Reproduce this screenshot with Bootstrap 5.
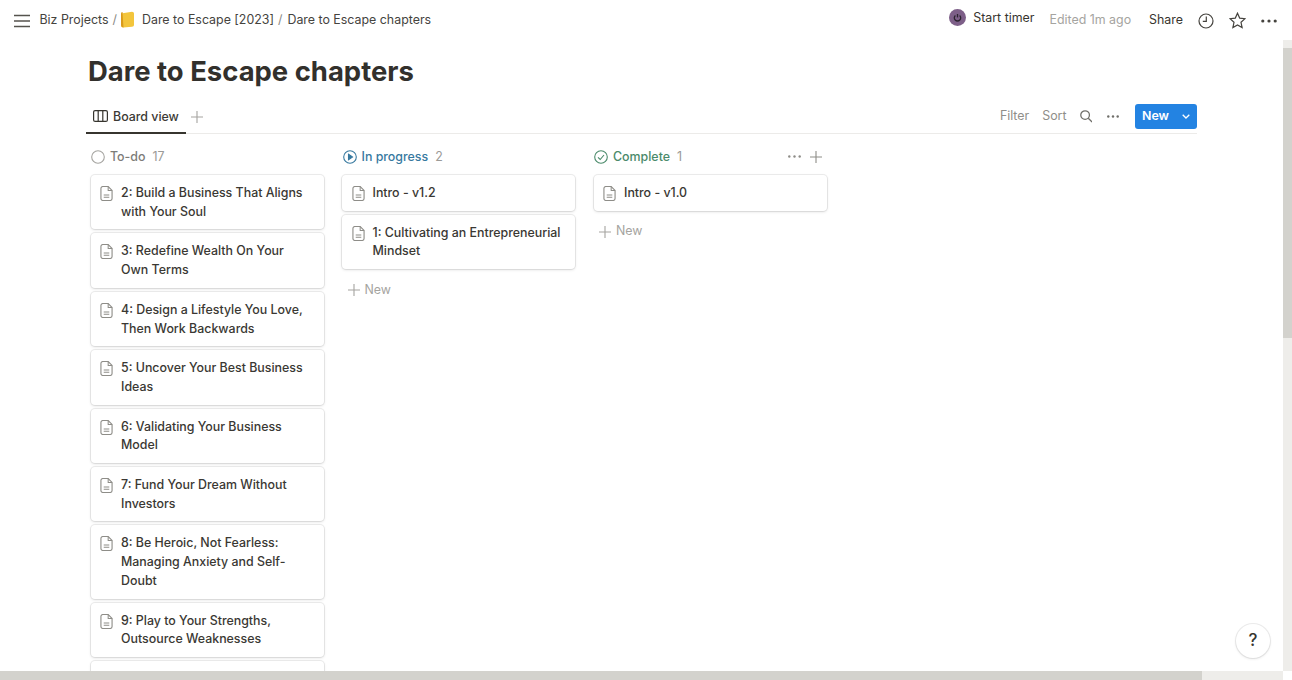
<!DOCTYPE html>
<html lang="en">
<head>
<meta charset="utf-8">
<title>Dare to Escape chapters</title>
<link href="https://cdn.jsdelivr.net/npm/bootstrap@5.3.0/dist/css/bootstrap.min.css" rel="stylesheet">
<style>
html,body{height:100%;overflow:hidden;background:#fff}
body{font-family:Inter,"Liberation Sans",sans-serif;color:#37352f;font-size:12.4px}
.app-frame{width:1292px;height:680px}
.top-strip{height:40px;flex:none;padding:1px 15px 0 14px}
.crumbs{margin-left:9.5px;color:#45433e}
.crumb-sep{color:#8a8984;margin:0 0 0 4px}
.crumb-book{width:15px;height:17px;margin:-2px 7px 0 3px}
.crumb-last{margin-left:5px}
.timer-dot{margin-top:-7px}
.timer-text{margin:-5px 15px 0 7px}
.edited{color:#a5a4a0;margin-right:18px}
.share{margin-right:14.5px}
.clock-ico{margin-right:15.5px}
.star-ico{margin-right:15px}
.page-body{min-height:0}
.page-col{min-width:0;padding-left:86px;overflow:hidden}
.scroll-v{width:9px;background:#eeedea;flex:none}
.scroll-v-thumb{height:290px;margin-top:8px;background:#d3d2cd}
.scroll-h{height:9px;background:#eeedea;flex:none}
.scroll-h-thumb{width:1202px;background:#d3d2cd}
.scroll-corner{width:9px;background:#fff}
.page-title{font-size:27.45px;font-weight:700;color:#32302c;line-height:36px;margin:13px 0 0 2px}
.tabs-row{width:1111px;height:35px;margin-top:10px;border-bottom:1px solid #ecebe9}
.tab-on{height:35px;width:100px;margin-bottom:-1px;border-bottom:2px solid #37352f;padding:0 0 0 7px;color:#3c3a35;font-weight:500}
.tab-on svg{margin-right:5px}
.tab-label{margin-top:3px}
.tab-plus{margin:2px 0 0 5px}
.tools{color:#8f8e89;margin-top:1px}
.tools>span{margin-right:13px}
.search-ico{margin-right:15px}
.btn-new{height:25px;width:62px;margin-left:16px;background:#2383e2;color:#fff;font-weight:600;font-size:12.4px;border-radius:3px;padding:0 7px 0 7px}
.btn-new:hover{background:#2383e2;color:#fff}
.board{width:750px;padding-left:4px;gap:16.5px}
.lane{width:235px;flex:none}
.lane-head{height:41px;padding:4px 0 0 1px;font-weight:500}
.lane-name{margin:2px 0 0 5px}
.lane-count{margin:2px 0 0 7px;color:#9b9a97;font-weight:400}
.todo-tone{color:#7d7c78}
.prog-tone{color:#37799f}
.done-tone{color:#4a8a6a}
.lane-tools{gap:9px;margin-right:6px}
.task{background:#fff;border-radius:4px;box-shadow:0 0 0 1px rgba(15,15,15,.07),0 1px 3px rgba(15,15,15,.13);padding:9px 10px 8px 9.5px;margin:0 1.5px 4px .5px;line-height:18.7px;font-weight:500;color:#3a3833;border:0}
.task svg{flex:none;margin:2px 8px 0 0}
.add-row{color:#a5a4a0;height:30px;padding:4px 0 0 6px}
.add-row svg{margin-right:5px}
.help-bubble{position:absolute;right:22px;bottom:22px;width:34px;height:34px;border-radius:50%;background:#fff;box-shadow:0 0 0 1px rgba(15,15,15,.07),0 1px 3px rgba(15,15,15,.1);font-size:17px;font-weight:500;color:#37352f}
</style>
</head>
<body>
<svg width="0" height="0" class="position-absolute">
  <symbol id="doc" viewBox="0 0 14 16"><path d="M1 2.500a2 2 0 0 1 2-2H8.800L13 4.700V13.500a2 2 0 0 1-2 2H3a2 2 0 0 1-2-2z" fill="none" stroke="#8e8d88" stroke-width="1.200"/><path d="M8.800.5v4.200H13M4 9.500h6M4 12h6" fill="none" stroke="#8e8d88" stroke-width="1.100"/></symbol>
  <symbol id="plus" viewBox="0 0 12 12"><path d="M6 0v12M0 6h12" stroke="currentColor" stroke-width="1.100"/></symbol>
</svg>
<div class="app-frame d-flex flex-column position-relative">
  <header class="top-strip d-flex align-items-center">
    <svg width="16" height="14" viewBox="0 0 16 14" fill="none" stroke="#55534e" stroke-width="1.500"><path d="M0 1.500h16M0 7h16M0 12.500h16"/></svg>
    <nav class="crumbs d-flex align-items-center flex-grow-1">
      <span>Biz Projects</span><span class="crumb-sep">/</span>
      <svg class="crumb-book" viewBox="0 0 15 17"><path d="M1 2.500 L12 .8 Q14 .8 14 2.500 V14 Q14 15.600 12 15.800 L3 16.500 Q1 16.500 1 14Z" fill="#f3c53c"/><path d="M1 2.500 Q1 .9 2.500 1 L3.500 16.400 Q1 16.500 1 14Z" fill="#d99a1c"/></svg>
      <span>Dare to Escape [2023]</span><span class="crumb-sep">/</span><span class="crumb-last">Dare to Escape chapters</span>
    </nav>
    <svg class="timer-dot" width="17" height="17" viewBox="0 0 17 17"><circle cx="8.500" cy="8.500" r="8.500" fill="#7d5f88"/><path d="M6.400 6.400a3.200 3.200 0 1 0 4.200 0" fill="none" stroke="#2c2430" stroke-width="1.300"/><path d="M8.500 5v3.400" stroke="#2c2430" stroke-width="1.300"/></svg>
    <span class="timer-text">Start timer</span>
    <span class="edited">Edited 1m ago</span>
    <span class="share">Share</span>
    <svg class="clock-ico" width="16" height="16" viewBox="0 0 16 16" fill="none" stroke="#45433e" stroke-width="1.200"><circle cx="8" cy="8" r="7"/><path d="M8.300 3.600v4.800H4.800"/></svg>
    <svg class="star-ico" width="17" height="17" viewBox="0 0 17 17" fill="none" stroke="#45433e" stroke-width="1.200"><path d="M8.500 1.200l2.200 4.900 5.300.6-4 3.600 1.100 5.300-4.600-2.700-4.600 2.700 1.100-5.300-4-3.600 5.300-.6z"/></svg>
    <svg width="16" height="4" viewBox="0 0 16 4" fill="#45433e"><circle cx="1.800" cy="2" r="1.600"/><circle cx="8" cy="2" r="1.600"/><circle cx="14.200" cy="2" r="1.600"/></svg>
  </header>
  <div class="page-body d-flex flex-grow-1">
    <main class="page-col flex-grow-1">
      <h1 class="page-title">Dare to Escape chapters</h1>
      <div class="tabs-row d-flex align-items-center">
        <div class="tab-on d-flex align-items-center">
          <svg width="15" height="12" viewBox="0 0 15 12" fill="none" stroke="#37352f" stroke-width="1.200"><rect x=".6" y=".6" width="13.800" height="10.800" rx="1.500"/><path d="M5.200.6v10.800M9.800.6v10.800"/></svg><span class="tab-label">Board view</span>
        </div>
        <svg class="tab-plus" width="12" height="12" style="color:#a5a4a0"><use href="#plus"/></svg>
        <div class="tools ms-auto d-flex align-items-center">
          <span>Filter</span><span>Sort</span>
          <svg class="search-ico" width="12.500" height="12.500" viewBox="0 0 13 13" fill="none" stroke="#6f6e69" stroke-width="1.300"><circle cx="5.300" cy="5.300" r="4.500"/><path d="M8.600 8.600l4 4"/></svg>
          <svg width="12" height="3" viewBox="0 0 12 3" fill="#6f6e69"><circle cx="1.300" cy="1.500" r="1.200"/><circle cx="6" cy="1.500" r="1.200"/><circle cx="10.700" cy="1.500" r="1.200"/></svg>
          <button type="button" class="btn-new btn border-0 d-flex align-items-center">New<svg class="ms-auto" width="8" height="5" viewBox="0 0 8 5" fill="none" stroke="#fff" stroke-width="1.300"><path d="M.7.7L4 4l3.300-3.300"/></svg></button>
        </div>
      </div>
      <div class="board d-flex">
        <section class="lane">
          <div class="lane-head d-flex align-items-center todo-tone">
            <svg width="14" height="14" viewBox="0 0 14 14" fill="none" stroke="#a5a4a0" stroke-width="1.100"><circle cx="7" cy="7" r="6.300"/></svg>
            <span class="lane-name">To-do</span><span class="lane-count">17</span>
          </div>
          <div class="task card d-flex flex-row"><svg width="13" height="15"><use href="#doc"/></svg><span>2: Build a Business That Aligns with Your Soul</span></div>
          <div class="task card d-flex flex-row"><svg width="13" height="15"><use href="#doc"/></svg><span>3: Redefine Wealth On Your Own Terms</span></div>
          <div class="task card d-flex flex-row"><svg width="13" height="15"><use href="#doc"/></svg><span>4: Design a Lifestyle You Love, Then Work Backwards</span></div>
          <div class="task card d-flex flex-row"><svg width="13" height="15"><use href="#doc"/></svg><span>5: Uncover Your Best Business Ideas</span></div>
          <div class="task card d-flex flex-row"><svg width="13" height="15"><use href="#doc"/></svg><span>6: Validating Your Business Model</span></div>
          <div class="task card d-flex flex-row"><svg width="13" height="15"><use href="#doc"/></svg><span>7: Fund Your Dream Without Investors</span></div>
          <div class="task card d-flex flex-row"><svg width="13" height="15"><use href="#doc"/></svg><span>8: Be Heroic, Not Fearless: Managing Anxiety and Self-Doubt</span></div>
          <div class="task card d-flex flex-row"><svg width="13" height="15"><use href="#doc"/></svg><span>9: Play to Your Strengths, Outsource Weaknesses</span></div>
          <div class="task card d-flex flex-row"><span>&nbsp;</span></div>
        </section>
        <section class="lane">
          <div class="lane-head d-flex align-items-center prog-tone">
            <svg width="14" height="14" viewBox="0 0 14 14" fill="none" stroke="#37799f" stroke-width="1.100"><circle cx="7" cy="7" r="6.300"/><path d="M5.500 4.300L9.500 7l-4 2.700z" fill="#37799f"/></svg>
            <span class="lane-name">In progress</span><span class="lane-count">2</span>
          </div>
          <div class="task card d-flex flex-row"><svg width="13" height="15"><use href="#doc"/></svg><span>Intro - v1.2</span></div>
          <div class="task card d-flex flex-row"><svg width="13" height="15"><use href="#doc"/></svg><span>1: Cultivating an Entrepreneurial Mindset</span></div>
          <div class="add-row d-flex align-items-center"><svg width="12" height="12"><use href="#plus"/></svg>New</div>
        </section>
        <section class="lane">
          <div class="lane-head d-flex align-items-center done-tone">
            <svg width="14" height="14" viewBox="0 0 14 14" fill="none" stroke="#4a8a6a" stroke-width="1.100"><circle cx="7" cy="7" r="6.300"/><path d="M4 7.300l2.200 2.200L10 5"/></svg>
            <span class="lane-name">Complete</span><span class="lane-count">1</span>
            <div class="lane-tools ms-auto d-flex align-items-center">
              <svg width="13" height="3" viewBox="0 0 13 3" fill="#8e8d88"><circle cx="1.300" cy="1.500" r="1.200"/><circle cx="6.500" cy="1.500" r="1.200"/><circle cx="11.700" cy="1.500" r="1.200"/></svg>
              <svg width="12" height="12" style="color:#8e8d88"><use href="#plus"/></svg>
            </div>
          </div>
          <div class="task card d-flex flex-row"><svg width="13" height="15"><use href="#doc"/></svg><span>Intro - v1.0</span></div>
          <div class="add-row d-flex align-items-center"><svg width="12" height="12"><use href="#plus"/></svg>New</div>
        </section>
      </div>
    </main>
    <div class="scroll-v"><div class="scroll-v-thumb"></div></div>
  </div>
  <div class="scroll-h d-flex"><div class="scroll-h-thumb"></div><div class="flex-grow-1"></div><div class="scroll-corner"></div></div>
  <div class="help-bubble d-flex align-items-center justify-content-center">?</div>
</div>
<script src="https://cdn.jsdelivr.net/npm/bootstrap@5.3.0/dist/js/bootstrap.bundle.min.js"></script>
</body>
</html>
